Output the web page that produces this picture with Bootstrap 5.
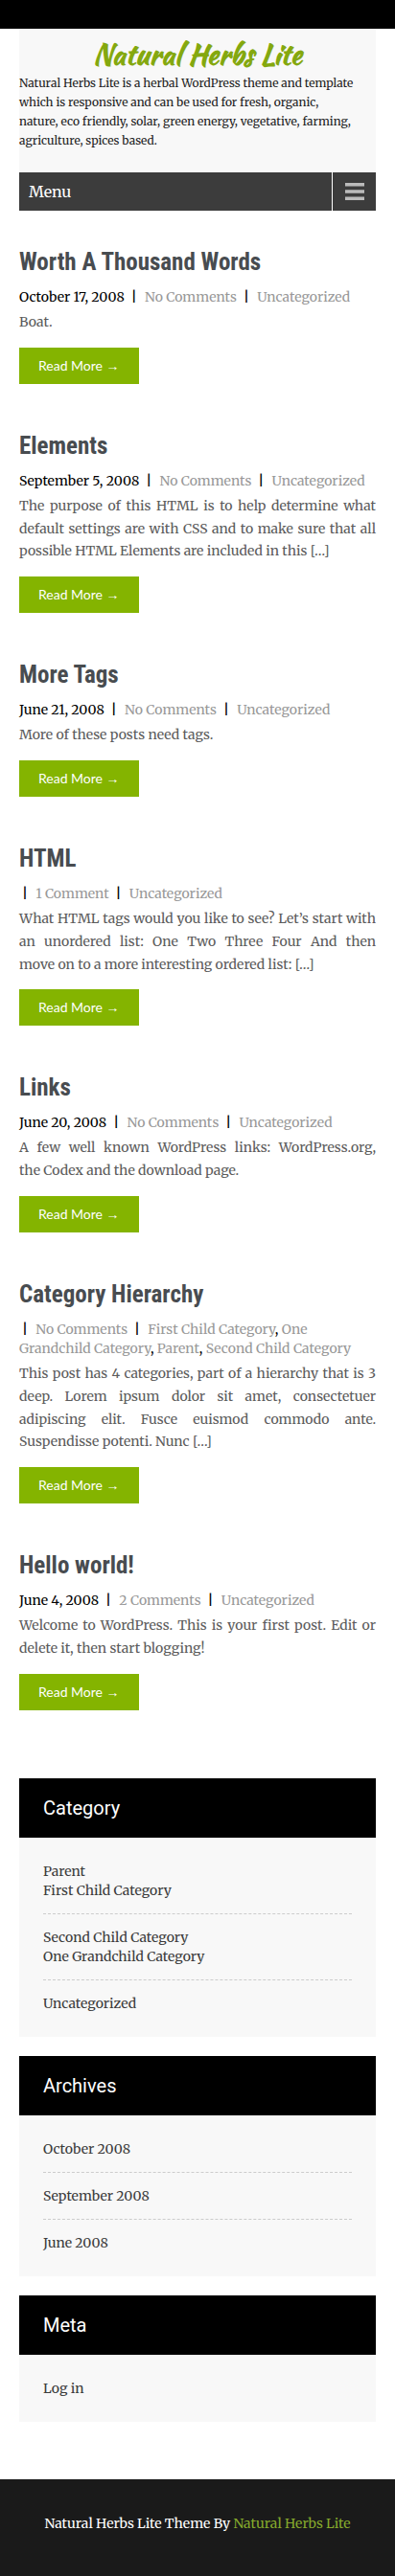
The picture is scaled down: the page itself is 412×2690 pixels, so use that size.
<!DOCTYPE html>
<html lang="en">
<head>
<meta charset="utf-8">
<meta name="viewport" content="width=device-width, initial-scale=1">
<title>Natural Herbs Lite</title>
<link href="https://cdn.jsdelivr.net/npm/bootstrap@5.3.0/dist/css/bootstrap.min.css" rel="stylesheet">
<style>
body{font-family:Merriweather,"DejaVu Serif Condensed","DejaVu Serif",serif;font-size:14px;line-height:20px;color:#000;background:#fff}
a{text-decoration:none}
.top-strip{height:30px;background:#000}
.page-wrap{padding:0 20px}
.site-head{background:#f8f8f8;padding:5px 0 23px}
.site-logo{font-family:"Kaushan Script","Lato",cursive;font-weight:700;font-size:30px;line-height:42px;margin:0;text-align:center}
.site-logo a{color:#84a80f}
.tagline{font-size:12px;margin:0;color:#222}
.menu-toggle{background:#3c3c3c;color:#fff;border:0;height:40px;width:100%;padding:0 0 0 10px;font-size:16px}
.menu-bars{width:46px;border-left:1px solid #fff}
.post{margin-bottom:50px}
.post h2{font-family:"Roboto Condensed","Liberation Sans Narrow",sans-serif;font-weight:700;font-size:25px;line-height:30px;margin:0 0 11px}
.post h2 a{color:#484c50}
.post-meta{margin-bottom:5px}
.post-meta a{color:#999}
.post-meta i{font-style:normal;font-weight:700;margin:0 5px 0 7px}
.post-meta i.first-bar{margin-left:3px}
.post-text{line-height:1.7;color:#5c5c5c;text-align:justify;margin:0 0 14px}
.more-btn{display:inline-block;vertical-align:top;background:#84b400;color:#fff;font-family:Lato,sans-serif;font-size:14px;line-height:20px;padding:9px 20px;width:125px;white-space:nowrap}
.more-btn span{font-family:"Liberation Sans",sans-serif}
.posts{padding-top:39px}
.side-box{margin-bottom:20px;background:#f8f8f8}
.side-box h3{background:#000;color:#fff;font-family:Roboto,sans-serif;font-weight:400;font-size:20px;line-height:22px;padding:20px 25px;margin:0}
.side-box ul{padding:25px}
.side-box li{border-bottom:1px dashed #ccc;padding-bottom:14px;margin-bottom:14px}
.side-box li:last-child{border:0;padding:0;margin:0}
.side-box a{color:#3c3c3c;display:block}
.sidebar{padding-top:21px}
.site-foot{background:#1a1a1a;color:#fff;padding:36px 20px 45px;margin-top:60px}
.site-foot a{color:#84a82c}
</style>
</head>
<body>
<div class="top-strip"></div>
<div class="page-wrap">
<header>
<div class="site-head">
<h1 class="site-logo"><a href="#">Natural Herbs Lite</a></h1>
<p class="tagline">Natural Herbs Lite is a herbal WordPress theme and template which is responsive and can be used for fresh, organic, nature,&nbsp;eco friendly, solar, green energy, vegetative, farming, agriculture, spices based.</p>
</div>
<button type="button" class="menu-toggle d-flex align-items-stretch justify-content-between"><span class="align-self-center">Menu</span><span class="menu-bars d-flex align-items-center justify-content-center"><svg width="20" height="18" viewBox="0 0 20 18" aria-hidden="true"><path fill="#bbb" d="M0 0h20v3.6H0zM0 7.2h20v3.6H0zM0 14.4h20V18H0z"/></svg></span></button>
</header>
<main class="posts">
<article class="post"><h2><a href="#">Worth A Thousand Words</a></h2>
<div class="post-meta">October 17, 2008<i>|</i> <a href="#">No Comments</a><i>|</i> <a href="#">Uncategorized</a></div>
<p class="post-text">Boat.</p><a class="more-btn" href="#">Read More <span>→</span></a></article>
<article class="post"><h2><a href="#">Elements</a></h2>
<div class="post-meta">September 5, 2008<i>|</i> <a href="#">No Comments</a><i>|</i> <a href="#">Uncategorized</a></div>
<p class="post-text">The purpose of this HTML is to help determine what default settings are with CSS and to make sure that all possible HTML Elements are included in this […]</p><a class="more-btn" href="#">Read More <span>→</span></a></article>
<article class="post"><h2><a href="#">More Tags</a></h2>
<div class="post-meta">June 21, 2008<i>|</i> <a href="#">No Comments</a><i>|</i> <a href="#">Uncategorized</a></div>
<p class="post-text">More of these posts need tags.</p><a class="more-btn" href="#">Read More <span>→</span></a></article>
<article class="post"><h2><a href="#">HTML</a></h2>
<div class="post-meta"><i class="first-bar">|</i> <a href="#">1 Comment</a><i>|</i> <a href="#">Uncategorized</a></div>
<p class="post-text">What HTML tags would you like to see? Let’s start with an unordered list: One Two Three Four And then move&nbsp;on&nbsp;to a more interesting ordered list: […]</p><a class="more-btn" href="#">Read More <span>→</span></a></article>
<article class="post"><h2><a href="#">Links</a></h2>
<div class="post-meta">June 20, 2008<i>|</i> <a href="#">No Comments</a><i>|</i> <a href="#">Uncategorized</a></div>
<p class="post-text">A few well known WordPress links: WordPress.org, the&nbsp;Codex and the download page.</p><a class="more-btn" href="#">Read More <span>→</span></a></article>
<article class="post"><h2><a href="#">Category Hierarchy</a></h2>
<div class="post-meta"><i class="first-bar">|</i> <a href="#">No Comments</a><i>|</i> <a href="#">First Child Category</a>, <a href="#">One Grandchild Category</a>, <a href="#">Parent</a>, <a href="#">Second Child Category</a></div>
<p class="post-text">This post has 4 categories, part of a hierarchy that is 3 deep. Lorem ipsum dolor sit amet, consectetuer adipiscing elit. Fusce euismod commodo ante. Suspendisse potenti. Nunc […]</p><a class="more-btn" href="#">Read More <span>→</span></a></article>
<article class="post"><h2><a href="#">Hello world!</a></h2>
<div class="post-meta">June 4, 2008<i>|</i> <a href="#">2 Comments</a><i>|</i> <a href="#">Uncategorized</a></div>
<p class="post-text">Welcome to WordPress. This is your first post. Edit or delete it, then start blogging!</p><a class="more-btn" href="#">Read More <span>→</span></a></article>
</main>
<aside class="sidebar">
<section class="side-box"><h3>Category</h3><ul class="list-unstyled mb-0"><li><a href="#">Parent</a><a href="#">First Child Category</a></li><li><a href="#">Second Child Category</a><a href="#">One Grandchild Category</a></li><li><a href="#">Uncategorized</a></li></ul></section>
<section class="side-box"><h3>Archives</h3><ul class="list-unstyled mb-0"><li><a href="#">October 2008</a></li><li><a href="#">September 2008</a></li><li><a href="#">June 2008</a></li></ul></section>
<section class="side-box"><h3>Meta</h3><ul class="list-unstyled mb-0"><li><a href="#">Log in</a></li></ul></section>
</aside>
</div>
<footer class="site-foot text-center">Natural Herbs Lite Theme By <a href="#">Natural Herbs Lite</a></footer>
<script src="https://cdn.jsdelivr.net/npm/bootstrap@5.3.0/dist/js/bootstrap.bundle.min.js"></script>
</body>
</html>
